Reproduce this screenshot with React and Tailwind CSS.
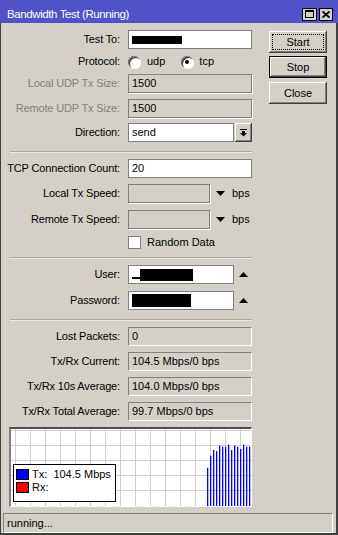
import React from "react";

const bars = [38.7, 26.7, 21, 22, 16.7, 17.7, 17.7, 15.7, 21, 16.7, 17.7, 20, 15.7, 17.7, 17.7];

function Label({ children, disabled }) {
  return (
    <div
      className={
        disabled
          ? "w-[119px] shrink-0 text-right text-[#808080] tracking-[-0.15px]"
          : "w-[119px] shrink-0 text-right text-black tracking-[-0.15px]"
      }
    >
      {children}
    </div>
  );
}

function Row({ label, disabled, className, children }) {
  return (
    <div className={"flex items-center gap-[8px] h-[19px] " + className}>
      <Label disabled={disabled}>{label}</Label>
      {children}
    </div>
  );
}

function Separator({ className }) {
  return (
    <div className={"ml-[9px] w-[242px] flex flex-col " + className}>
      <div className="h-px bg-[#aca8a0]" />
      <div className="h-px bg-[#ebe9e4]" />
    </div>
  );
}

function DownTri() {
  return (
    <svg width="9" height="5" viewBox="0 0 9 5">
      <polygon points="0,0 9,0 4.5,5" fill="#000" />
    </svg>
  );
}

function UpTri() {
  return (
    <svg width="9" height="5" viewBox="0 0 9 5">
      <polygon points="0,5 9,5 4.5,0" fill="#000" />
    </svg>
  );
}

const raised =
  "shadow-[inset_-1px_-1px_0_#404040,inset_1px_1px_0_#ffffff,inset_-2px_-2px_0_#808080]";

function Radio({ checked }) {
  return (
    <div className="w-[12px] h-[12px] rounded-full bg-white shadow-[inset_1px_1px_0_#808080,inset_2px_2px_0_#404040,1px_1px_0_#ffffff] flex items-center justify-center">
      {checked && <div className="w-[4px] h-[4px] rounded-full bg-black" />}
    </div>
  );
}

function Chart() {
  const vlines = [];
  for (let x = 4; x < 240; x += 15) vlines.push(x);
  const hlines = [1, 16, 31, 46, 61];
  return (
    <div className="relative ml-[8px] mt-[6px] w-[243px] h-[80px] bg-white border-t-2 border-l-2 border-r border-b border-t-[#505050] border-l-[#808080] border-r-white border-b-white">
      <svg width="240" height="77" viewBox="0 0 240 77" className="block">
        {vlines.map((x) => (
          <rect key={"v" + x} x={x} y="0" width="1" height="77" fill="#cfcfcf" />
        ))}
        {hlines.map((y) => (
          <rect key={"h" + y} x="0" y={y} width="240" height="1" fill="#cfcfcf" />
        ))}
        {bars.map((t, i) => (
          <rect key={i} x={196 + i * 3} y={t} width="1.3" height={77 - t} fill="#0000ff" />
        ))}
      </svg>
      <div className="absolute left-[2px] top-[35px] w-[103px] h-[38px] bg-white border border-black flex flex-col gap-[1px] pt-[3px] pl-[2px]">
        <div className="flex items-center gap-[3px] h-[12px]">
          <div className="w-[13px] h-[11px] bg-[#0000ff] border border-black" />
          <span className="whitespace-pre leading-none">Tx:  104.5 Mbps</span>
        </div>
        <div className="flex items-center gap-[3px] h-[12px]">
          <div className="w-[13px] h-[11px] bg-[#ff0000] border border-black" />
          <span className="leading-none">Rx:</span>
        </div>
      </div>
    </div>
  );
}

export default function App() {
  const white = "bg-white border border-[#808080] h-[19px] flex items-center pl-[3px]";
  const dis = "bg-[#d4d0c8] border border-[#808080] shadow-[1px_1px_0_#ffffff] h-[19px] flex items-center pl-[3px]";
  const ro = "bg-[#d4d0c8] border border-[#808080] border-b-white border-r-white h-[19px] flex items-center pl-[3px]";

  return (
    <div className="w-[338px] h-[535px] bg-[#d4d0c8] font-['Liberation_Sans',Arial,sans-serif] text-[11px] text-black flex flex-col overflow-hidden leading-[13px]">
      {/* title bar */}
      <div className="h-[23px] shrink-0 bg-[#5151c9] flex items-center pt-[5px] pl-[7px] pr-[5px]">
        <span className="text-white text-[11.5px] tracking-[-0.4px] flex-1">Bandwidth Test (Running)</span>
        <div className="flex gap-[2px]">
          <div className="w-[15px] h-[13px] bg-[#d4d0c8] border border-black flex items-center justify-center">
            <svg width="9" height="8" viewBox="0 0 9 8">
              <rect x="0.5" y="0.5" width="8" height="7" fill="none" stroke="#000" />
              <rect x="0" y="0" width="9" height="2" fill="#000" />
            </svg>
          </div>
          <div className="w-[14px] h-[13px] bg-[#d4d0c8] border border-black flex items-center justify-center">
            <svg width="8" height="7" viewBox="0 0 8 7">
              <path d="M0.5 0.5 L7.5 6.5 M7.5 0.5 L0.5 6.5" stroke="#000" strokeWidth="1.8" />
            </svg>
          </div>
        </div>
      </div>

      <div className="flex-1 flex flex-col border-l border-r-2 border-b-2 border-[#404040]">
        <div className="flex">
          {/* form column */}
          <div className="w-[251px] flex flex-col">
            <Row label="Test To:" className="mt-[7px]">
              <div className={white + " w-[124px]"}>
                <span className="w-[50px] h-[8px] bg-black" />
              </div>
            </Row>
            <Row label="Protocol:" className="mt-[3px]">
              <div className="flex items-center">
                <Radio />
                <span className="ml-[7px]">udp</span>
                <div className="ml-[16px]">
                  <Radio checked />
                </div>
                <span className="ml-[6px]">tcp</span>
              </div>
            </Row>
            <Row label="Local UDP Tx Size:" disabled className="mt-[3px]">
              <div className={dis + " w-[124px]"}>1500</div>
            </Row>
            <Row label="Remote UDP Tx Size:" disabled className="mt-[6px]">
              <div className={dis + " w-[124px]"}>1500</div>
            </Row>
            <Row label="Direction:" className="mt-[5px]">
              <div className="flex gap-[1px]">
                <div className={white + " w-[106px]"}>send</div>
                <div className={"w-[17px] h-[19px] bg-[#d4d0c8] flex items-center justify-center " + raised}>
                  <svg width="9" height="9" viewBox="0 0 9 9">
                    <rect x="1" y="1" width="7" height="1" fill="#000" />
                    <rect x="3" y="3" width="3" height="2" fill="#000" />
                    <polygon points="1,5 8,5 4.5,8.5" fill="#000" />
                  </svg>
                </div>
              </div>
            </Row>

            <Separator className="mt-[9px]" />

            <Row label="TCP Connection Count:" className="mt-[6px]">
              <div className={white + " w-[124px]"}>20</div>
            </Row>
            <Row label="Local Tx Speed:" className="mt-[6px]">
              <div className="flex items-center">
                <div className={dis + " w-[82px]"} />
                <div className="ml-[6px]">
                  <DownTri />
                </div>
                <span className="ml-[7px]">bps</span>
              </div>
            </Row>
            <Row label="Remote Tx Speed:" className="mt-[7px]">
              <div className="flex items-center">
                <div className={dis + " w-[82px]"} />
                <div className="ml-[6px]">
                  <DownTri />
                </div>
                <span className="ml-[7px]">bps</span>
              </div>
            </Row>
            <Row label="" className="mt-[4px]">
              <div className="flex items-center">
                <div className="w-[13px] h-[13px] bg-white border border-[#808080]" />
                <span className="ml-[6px]">Random Data</span>
              </div>
            </Row>

            <Separator className="mt-[5px]" />

            <Row label="User:" className="mt-[6px]">
              <div className="flex items-center">
                <div className={white + " w-[106px]"}>
                  <span className="w-[8px] h-[2px] bg-black mt-[6px]" />
                  <span className="w-[53px] h-[12px] bg-black" />
                </div>
                <div className="ml-[5px]">
                  <UpTri />
                </div>
              </div>
            </Row>
            <Row label="Password:" className="mt-[7px]">
              <div className="flex items-center">
                <div className={white + " w-[106px]"}>
                  <span className="w-[59px] h-[13px] bg-black" />
                </div>
                <div className="ml-[5px]">
                  <UpTri />
                </div>
              </div>
            </Row>

            <Separator className="mt-[9px]" />

            <Row label="Lost Packets:" className="mt-[6px]">
              <div className={ro + " w-[124px]"}>0</div>
            </Row>
            <Row label="Tx/Rx Current:" className="mt-[6px]">
              <div className={ro + " w-[124px]"}>104.5 Mbps/0 bps</div>
            </Row>
            <Row label="Tx/Rx 10s Average:" className="mt-[6px]">
              <div className={ro + " w-[124px]"}>104.0 Mbps/0 bps</div>
            </Row>
            <Row label="Tx/Rx Total Average:" className="mt-[6px]">
              <div className={ro + " w-[124px]"}>99.7 Mbps/0 bps</div>
            </Row>

            <Chart />
          </div>

          {/* buttons */}
          <div className="ml-[17px] pt-[8px] flex flex-col">
            <div className={"w-[58px] h-[22px] bg-[#d4d0c8] p-[3px] " + raised}>
              <div className="w-full h-full border border-dotted border-black flex items-center justify-center">
                Start
              </div>
            </div>
            <div className="mt-[3px] w-[58px] h-[22px] border border-black">
              <div className={"w-full h-full bg-[#d4d0c8] flex items-center justify-center " + raised}>Stop</div>
            </div>
            <div className={"mt-[4px] w-[58px] h-[22px] bg-[#d4d0c8] flex items-center justify-center " + raised}>
              Close
            </div>
          </div>
        </div>

        {/* status bar */}
        <div className="mt-[6px] ml-[2px] w-[330px] h-[20px] border border-[#808080] border-b-white border-r-white flex items-center pl-[3px]">
          running...
        </div>
      </div>
    </div>
  );
}
